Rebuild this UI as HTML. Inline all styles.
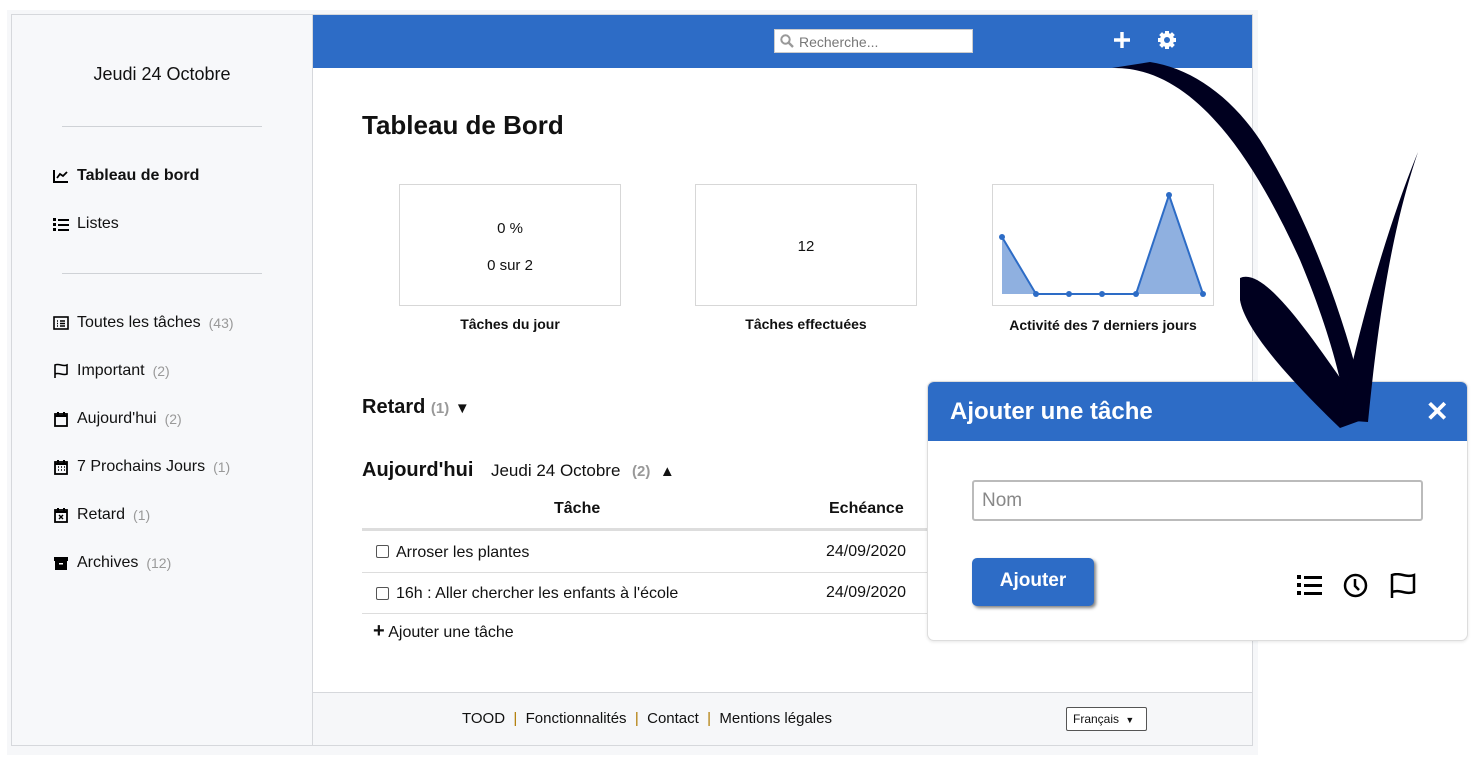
<!DOCTYPE html>
<html><head><meta charset="utf-8"><style>
*{box-sizing:border-box;margin:0;padding:0}
body{width:1476px;height:771px;background:#fff;font-family:"Liberation Sans",Arial,sans-serif;position:relative;overflow:hidden;color:#111}
.abs{position:absolute}
.frame{left:7px;top:10px;width:1251px;height:745px;background:#f6f7f9}
.app{left:11px;top:14px;width:1242px;height:732px;border:1px solid #d6d8dc;background:#fff}
.side{left:11px;top:14px;width:302px;height:732px;background:#f7f8fa;border:1px solid #d6d8dc}
.hr{height:1px;background:#cfd2d6;width:200px;left:62px}
.nav{left:53px;font-size:16px;display:flex;align-items:center;gap:8px}
.nav svg{width:16px;height:16px}
.cnt{color:#999;font-size:14px}
.header{left:313px;top:15px;width:939px;height:53px;background:#2d6cc6}
.card{border:1px solid #d7d7d7;background:#fff}
.lbl{font-size:14px;font-weight:bold;text-align:center}
.footer{left:313px;top:692px;width:939px;height:53px;background:#f6f7f9;border-top:1px solid #d6d8dc}
.tr{left:362px;width:570px;height:1px;background:#ddd}
</style></head><body>
<div class="abs frame"></div>
<div class="abs app"></div>
<div class="abs side"></div>
<div class="abs" style="left:11px;top:64px;width:302px;text-align:center;font-size:18px">Jeudi 24 Octobre</div>
<div class="abs hr" style="top:126px"></div>
<div class="abs hr" style="top:273px"></div>
<div class="abs nav" style="top:167px;font-weight:bold"><svg viewBox="0 0 16 16"><path d="M1 2v12h14" stroke="#000" stroke-width="2" fill="none"/><path d="M4 10l3-4 3 2 4-4" stroke="#000" stroke-width="1.8" fill="none"/></svg>Tableau de bord</div>
<div class="abs nav" style="top:215px"><svg viewBox="0 0 16 16"><g fill="#000"><rect x="0" y="2" width="3" height="3"/><rect x="0" y="7" width="3" height="3"/><rect x="0" y="12" width="3" height="3"/><rect x="5" y="3" width="11" height="2"/><rect x="5" y="8" width="11" height="2"/><rect x="5" y="13" width="11" height="2"/></g></svg>Listes</div>
<div class="abs nav" style="top:314px"><svg viewBox="0 0 16 16"><rect x="1" y="2" width="14" height="12" stroke="#000" stroke-width="1.6" fill="none"/><path d="M4 6h1M4 8.5h1M4 11h1M7 6h5M7 8.5h5M7 11h5" stroke="#000" stroke-width="1.5"/></svg>Toutes les tâches<span class="cnt">(43)</span></div>
<div class="abs nav" style="top:362px"><svg viewBox="0 0 16 16"><path d="M2 15V2c4-2 8 2 12 0v9c-4 2-8-2-12 0" stroke="#000" stroke-width="1.6" fill="none"/></svg>Important<span class="cnt">(2)</span></div>
<div class="abs nav" style="top:410px"><svg viewBox="0 0 16 16"><rect x="2" y="3" width="12" height="12" stroke="#000" stroke-width="1.8" fill="none"/><path d="M2 5h12M5 1v3M11 1v3" stroke="#000" stroke-width="2"/></svg>Aujourd'hui<span class="cnt">(2)</span></div>
<div class="abs nav" style="top:458px"><svg viewBox="0 0 16 16"><rect x="2" y="3" width="12" height="12" stroke="#000" stroke-width="1.8" fill="none"/><path d="M2 5h12M5 1v3M11 1v3" stroke="#000" stroke-width="2"/><path d="M5 8h1M8 8h1M11 8h1M5 11h1M8 11h1M11 11h1" stroke="#000" stroke-width="1.5"/></svg>7 Prochains Jours<span class="cnt">(1)</span></div>
<div class="abs nav" style="top:506px"><svg viewBox="0 0 16 16"><rect x="2" y="3" width="12" height="12" stroke="#000" stroke-width="1.8" fill="none"/><path d="M2 5h12M5 1v3M11 1v3" stroke="#000" stroke-width="2"/><path d="M6 8l4 4M10 8l-4 4" stroke="#000" stroke-width="1.4"/></svg>Retard<span class="cnt">(1)</span></div>
<div class="abs nav" style="top:554px"><svg viewBox="0 0 16 16"><rect x="1" y="2" width="14" height="4" fill="#000"/><rect x="2" y="6" width="12" height="9" fill="#000"/><rect x="6" y="8" width="4" height="1.5" fill="#fff"/></svg>Archives<span class="cnt">(12)</span></div>

<div class="abs header"></div>
<div class="abs" style="left:774px;top:29px;width:199px;height:24px;background:#fff;border:1px solid #ccc;font-size:14px;color:#777;padding:4px 0 0 24px">Recherche...</div>
<svg class="abs" style="left:780px;top:34px" width="14" height="14" viewBox="0 0 14 14"><circle cx="5.5" cy="5.5" r="4.2" stroke="#999" stroke-width="2" fill="none"/><path d="M8.5 8.5l4.5 4.5" stroke="#999" stroke-width="2.4"/></svg>
<svg class="abs" style="left:1113px;top:31px" width="18" height="18" viewBox="0 0 18 18"><path d="M9 1v16M1 9h16" stroke="#fff" stroke-width="3.4"/></svg>
<svg class="abs" style="left:1157px;top:30px" width="20" height="20" viewBox="0 0 20 20"><g fill="#fff"><circle cx="10" cy="10" r="7"/><g stroke="#fff" stroke-width="4"><path d="M10 1v18M1 10h18M3.6 3.6l12.8 12.8M16.4 3.6L3.6 16.4"/></g></g><circle cx="10" cy="10" r="3" fill="#2d6cc6"/></svg>

<div class="abs" style="left:362px;top:110px;font-size:26px;font-weight:bold">Tableau de Bord</div>
<div class="abs card" style="left:399px;top:184px;width:222px;height:122px;text-align:center;font-size:15px"><div style="margin-top:35px">0 %</div><div style="margin-top:20px">0 sur 2</div></div>
<div class="abs lbl" style="left:399px;top:316px;width:222px">Tâches du jour</div>
<div class="abs card" style="left:695px;top:184px;width:222px;height:122px;text-align:center;font-size:15px"><div style="margin-top:53px">12</div></div>
<div class="abs lbl" style="left:695px;top:316px;width:222px">Tâches effectuées</div>
<div class="abs card" style="left:992px;top:184px;width:222px;height:122px"></div>
<svg class="abs" style="left:992px;top:184px" width="222" height="122"><polygon points="10,53 44,110 211,110 211,110 177,11 144,110 10,110" fill="#8fb0e0"/><polyline points="10,53 44,110 77,110 110,110 144,110 177,11 211,110" stroke="#2d6cc6" stroke-width="2" fill="none"/><g fill="#2d6cc6"><circle cx="10" cy="53" r="3"/><circle cx="44" cy="110" r="3"/><circle cx="77" cy="110" r="3"/><circle cx="110" cy="110" r="3"/><circle cx="144" cy="110" r="3"/><circle cx="177" cy="11" r="3"/><circle cx="211" cy="110" r="3"/></g></svg>
<div class="abs lbl" style="left:992px;top:317px;width:222px">Activité des 7 derniers jours</div>

<div class="abs" style="left:362px;top:396px;font-size:20px;font-weight:bold">Retard <span class="cnt" style="font-size:15px">(1)</span> <span style="font-size:15px">▼</span></div>
<div class="abs" style="left:362px;top:459px;font-size:20px;font-weight:bold">Aujourd'hui <span style="font-weight:normal;font-size:17px;margin-left:12px">Jeudi 24 Octobre</span> <span class="cnt" style="font-size:15px;margin-left:6px">(2)</span> <span style="font-size:15px;margin-left:4px">▲</span></div>
<div class="abs" style="left:554px;top:500px;font-size:16px;font-weight:bold">Tâche</div>
<div class="abs" style="left:829px;top:500px;font-size:16px;font-weight:bold">Echéance</div>
<div class="abs tr" style="top:528px;height:3px;background:#ddd"></div>
<div class="abs" style="left:376px;top:545px;width:13px;height:13px;border:1px solid #555;border-radius:2px"></div>
<div class="abs" style="left:396px;top:544px;font-size:16px">Arroser les plantes</div>
<div class="abs" style="left:826px;top:543px;font-size:16px">24/09/2020</div>
<div class="abs tr" style="top:572px"></div>
<div class="abs" style="left:376px;top:587px;width:13px;height:13px;border:1px solid #555;border-radius:2px"></div>
<div class="abs" style="left:396px;top:585px;font-size:16px">16h : Aller chercher les enfants à l'école</div>
<div class="abs" style="left:826px;top:584px;font-size:16px">24/09/2020</div>
<div class="abs tr" style="top:613px"></div>
<div class="abs" style="left:373px;top:623px;font-size:16px"><b style="font-size:20px;line-height:16px">+</b> Ajouter une tâche</div>

<div class="abs footer"></div>
<div class="abs" style="left:462px;top:710px;font-size:15px">TOOD &nbsp;<span style="color:#b07a00">|</span>&nbsp; Fonctionnalités &nbsp;<span style="color:#b07a00">|</span>&nbsp; Contact &nbsp;<span style="color:#b07a00">|</span>&nbsp; Mentions légales</div>
<div class="abs" style="left:1066px;top:707px;width:81px;height:24px;border:1px solid #555;border-radius:2px;background:#fff;font-size:12px;padding:4px 0 0 6px">Français <span style="font-size:9px;margin-left:3px">▼</span></div>

<div class="abs" style="left:927px;top:381px;width:541px;height:260px;background:#fff;border:1px solid #ddd;border-radius:7px;overflow:hidden;box-shadow:0 1px 3px rgba(0,0,0,.1)">
<div style="height:59px;background:#2d6cc6;color:#fff;font-size:24px;font-weight:bold;padding:16px 0 0 22px">Ajouter une tâche<span style="position:absolute;right:18px;top:13px;font-size:28px">✕</span></div>
</div>

<svg class="abs" style="left:0;top:0" width="1476" height="771"><g fill="#00001f">
<path d="M1112 68 C1190 66 1250 150 1300 260 C1325 320 1340 370 1348 420 L1368 420 C1350 330 1310 220 1260 140 C1230 95 1190 68 1150 62 Z"/>
<path d="M1240 278 C1262 268 1300 320 1345 385 L1362 420 L1340 428 C1290 380 1245 330 1240 300 Z"/>
<path d="M1418 152 C1395 220 1380 300 1368 422 L1340 420 C1360 320 1390 220 1418 152 Z"/>
</g></svg>

<div class="abs" style="left:972px;top:480px;width:451px;height:41px;border:2px solid #bbb;border-radius:3px;font-size:19px;color:#888;padding:8px 0 0 8px">Nom</div>
<div class="abs" style="left:972px;top:558px;width:122px;height:48px;background:#2d6cc6;border-radius:5px;color:#fff;font-weight:bold;font-size:19px;text-align:center;padding-top:12px;box-shadow:2px 2px 3px rgba(0,0,0,.5)">Ajouter</div>
<svg class="abs" style="left:1297px;top:574px" width="26" height="22" viewBox="0 0 26 22"><g fill="#000"><rect x="0" y="1" width="4" height="4"/><rect x="0" y="9" width="4" height="4"/><rect x="0" y="17" width="4" height="4"/><rect x="7" y="2" width="18" height="3"/><rect x="7" y="10" width="18" height="3"/><rect x="7" y="18" width="18" height="3"/></g></svg>
<svg class="abs" style="left:1343px;top:573px" width="25" height="25" viewBox="0 0 25 25"><circle cx="12.5" cy="12.5" r="10.5" stroke="#000" stroke-width="2.5" fill="none"/><path d="M12 6v7l4 4" stroke="#000" stroke-width="2.5" fill="none"/></svg>
<svg class="abs" style="left:1390px;top:573px" width="26" height="26" viewBox="0 0 26 26"><path d="M2 25V2c8-3 14 3 22 0v17c-8 3-14-3-22 0" stroke="#000" stroke-width="2.5" fill="none"/></svg>
</body></html>
